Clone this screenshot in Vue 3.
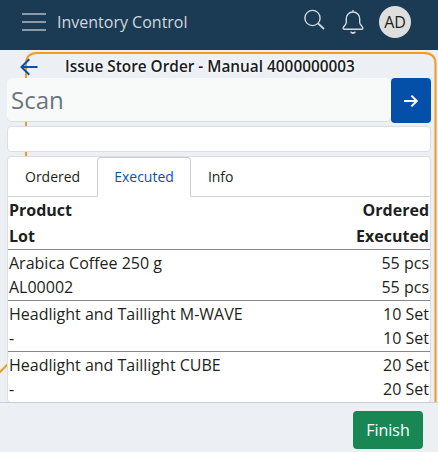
<script setup>
import { ref } from 'vue'

const tabs = ['Ordered', 'Executed', 'Info']
const active = ref('Executed')
const rows = [
  { product: 'Arabica Coffee 250 g', lot: 'AL00002', ordered: '55 pcs', executed: '55 pcs' },
  { product: 'Headlight and Taillight M-WAVE', lot: '-', ordered: '10 Set', executed: '10 Set' },
  { product: 'Headlight and Taillight CUBE', lot: '-', ordered: '20 Set', executed: '20 Set' },
]
</script>

<template>
  <div class="app">
    <header class="navbar">
      <svg class="menu" width="24" height="20" viewBox="0 0 24 20">
        <path d="M0 2h24M0 10h24M0 18h24" stroke="#8d9ba8" stroke-width="1.8" />
      </svg>
      <span class="brand">Inventory Control</span>
      <svg class="search" width="22" height="22" viewBox="0 0 22 22" fill="none" stroke="#d3d9df" stroke-width="1.4">
        <circle cx="9.500" cy="9" r="7.6" />
        <path d="M15 14.300L21 20" stroke-width="1.8" />
      </svg>
      <svg class="bell" width="22" height="26" viewBox="0 0 22 26" fill="none" stroke="#d3d9df" stroke-width="1.4">
        <path d="M11 1V3M11 3C7 3 4.3 6 4.3 10V13.5C4.3 15.8 1.1 17.5 1.1 19.2C1.1 20 1.6 20.3 2.4 20.3H19.6C20.4 20.3 20.9 20 20.9 19.2C20.9 17.5 17.7 15.8 17.7 13.5V10C17.7 6 15 3 11 3Z" />
        <path d="M8.9 22.6C9.2 24.4 12.8 24.4 13.1 22.6" stroke-width="1.9" />
      </svg>
      <span class="avatar">AD</span>
    </header>

    <main class="content">
      <svg class="backdrop" width="438" height="352" viewBox="0 0 438 352" fill="none" stroke="#f39c1c" stroke-width="2">
        <path d="M26 106V14Q26 3 37 3H424Q435.500 3 435.500 14V352" />
        <path d="M-2 324L10 312" />
      </svg>
      <div class="titlebar">
        <svg class="back" width="18" height="18" viewBox="0 0 18 18" fill="none" stroke="#0450a8" stroke-width="2">
          <path d="M17.500 9H1.500M9.300 1.200L1.500 9L9.300 16.800" />
        </svg>
        <h1>Issue Store Order - Manual 4000000003</h1>
      </div>
      <div class="scan">
        <input type="text" placeholder="Scan" />
        <button type="button" class="go">
          <svg width="16" height="14" viewBox="0 0 16 14" fill="none" stroke="#fff" stroke-width="2">
            <path d="M1 7H13.800M8.400 1.600L13.800 7L8.400 12.400" />
          </svg>
        </button>
      </div>
      <div class="message"></div>
      <section class="card">
        <nav class="tabs">
          <button v-for="tab in tabs" :key="tab" type="button" :class="['tab', { active: tab === active }]" @click="active = tab">{{ tab }}</button>
        </nav>
        <div class="row head">
          <span>Product</span><span>Ordered</span>
          <span>Lot</span><span>Executed</span>
        </div>
        <div v-for="row in rows" :key="row.product" class="row">
          <span>{{ row.product }}</span><span>{{ row.ordered }}</span>
          <span>{{ row.lot }}</span><span>{{ row.executed }}</span>
        </div>
      </section>
    </main>

    <footer class="footer">
      <button type="button" class="finish">Finish</button>
    </footer>
  </div>
</template>

<style>
body {
  margin: 0;
  overflow: hidden;
}
</style>

<style scoped>
.app {
  display: flex;
  flex-direction: column;
  width: 438px;
  height: 452px;
  background: #eceff4;
  color: #1d1f21;
  font: 16px/24px "Open Sans", "Noto Sans", sans-serif;
}
.app * {
  box-sizing: border-box;
}
button, input {
  margin: 0;
  padding: 0;
  border: 0;
  font: inherit;
}
.navbar {
  display: flex;
  align-items: center;
  flex: none;
  height: 50px;
  padding: 0 27px 6px 22px;
  background: #1b3a54;
}
.brand {
  margin-left: 11px;
  color: #d1d8dd;
}
.search {
  margin: -4px 0 0 auto;
}
.bell {
  margin: -1px 0 0 17px;
}
.avatar {
  display: flex;
  align-items: center;
  justify-content: center;
  width: 32px;
  height: 32px;
  margin-left: 15px;
  border-radius: 50%;
  background: #dedede;
  color: #1d1f21;
}
.content {
  position: relative;
  flex: none;
  height: 352px;
  padding: 0 7px;
  overflow: hidden;
}
.backdrop {
  position: absolute;
  inset: 0;
}
.titlebar, .scan, .message, .card {
  position: relative;
}
.titlebar {
  display: flex;
  align-items: center;
  height: 28px;
  padding: 5px 0 0 13px;
}
h1 {
  margin: 1px 0 0 27px;
  color: #1b1c1e;
  font-size: 15.36px;
  font-weight: 600;
  line-height: 22px;
  white-space: nowrap;
  text-shadow: 0 0 3px #fff, 0 0 5px #fff;
}
.scan {
  display: flex;
  height: 45px;
}
input {
  flex: 1;
  min-width: 0;
  height: 44px;
  padding: 0 4px;
  border-radius: 5px;
  background: #f8faf9;
  border-bottom: 1px solid #d5dae6;
  font-size: 24px;
}
input::placeholder {
  color: #6c757d;
  opacity: 1;
}
.go {
  display: flex;
  align-items: center;
  justify-content: center;
  width: 40px;
  border-radius: 4px;
  background: #044fa8;
}
.message {
  height: 26px;
  margin-top: 3px;
  border: 1px solid #dcdee1;
  border-radius: 4px;
  background: #fff;
}
.card {
  height: 247px;
  margin-top: 4px;
  border: 1px solid #dcdee1;
  border-radius: 4px;
  background: #fff;
}
.tabs {
  display: flex;
  height: 40px;
  border-bottom: 1px solid #d0d3d6;
}
.tab {
  height: 40px;
  padding: 0 16px;
  border: 1px solid transparent;
  border-radius: 4px 4px 0 0;
  background: transparent;
  color: #1d1f21;
  font-size: 14px;
}
.tab.active {
  border-color: #c9cdd2 #c9cdd2 #fff;
  background: #fff;
  color: #0a52aa;
}
.row {
  display: grid;
  grid-template-columns: 1fr auto;
  height: 51px;
  padding: 1px 1px;
  grid-auto-rows: 24px;
  border-bottom: 1px solid #85888a;
}
.row:last-child {
  border-bottom: 0;
}
.row span:nth-child(even) {
  text-align: right;
}
.head {
  height: 53px;
  padding-top: 0;
  grid-auto-rows: 26px;
  line-height: 26px;
  font-weight: 700;
}
.footer {
  display: flex;
  flex: none;
  justify-content: flex-end;
  height: 50px;
  padding: 8px 15px 0 0;
  border-top: 1px solid #c9ced5;
  background: #eceff4;
}
.finish {
  width: 70px;
  height: 38px;
  border-radius: 4px;
  background: #198754;
  color: #fff;
}
</style>
